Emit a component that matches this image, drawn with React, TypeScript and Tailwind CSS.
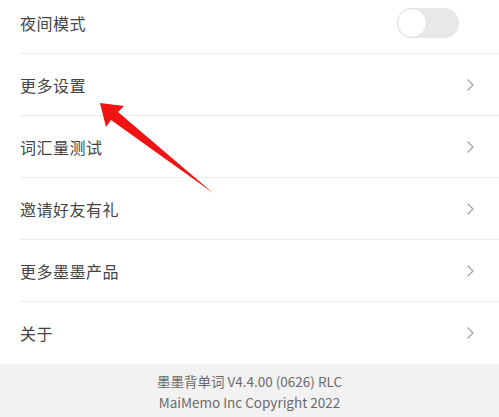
const rows = ["更多设置", "词汇量测试", "邀请好友有礼", "更多墨墨产品", "关于"];

function Chevron() {
  return (
    <svg width="9" height="14" viewBox="0 0 9 14" className="mr-[24px]">
      <path d="M1.5 1.5 L7 7 L1.5 12.5" fill="none" stroke="#a8a8a8" strokeWidth="1.4" />
    </svg>
  );
}

export default function App() {
  return (
    <div
      className="relative w-[499px] h-[417px] overflow-hidden bg-white"
      style={{ fontFamily: '"Noto Sans CJK SC", "Noto Sans", sans-serif' }}
    >
      <div className="flex flex-col">
        <div className="ml-[20px] h-[54px] pb-[8px] flex items-center justify-between border-b border-[#ececec]">
          <span className="text-[16px] tracking-[0.5px] text-[#444444]">夜间模式</span>
          <div className="mr-[40px] w-[62px] h-[30px] rounded-full bg-[#e8e8e8] flex items-center">
            <div className="w-[30px] h-[30px] rounded-full bg-white border border-[#e0e0e0]" />
          </div>
        </div>
        {rows.map((label, i) => (
          <div
            key={label}
            className={
              i < rows.length - 1
                ? "ml-[20px] h-[62px] flex items-center justify-between border-b border-[#ececec]"
                : "ml-[20px] h-[62px] flex items-center justify-between"
            }
          >
            <span className="text-[16px] tracking-[0.5px] text-[#444444]">{label}</span>
            <Chevron />
          </div>
        ))}
        <div className="h-[55px] bg-[#f2f2f2] flex flex-col items-center justify-center text-[13.5px] leading-[21px] text-[#6a6a6a]">
          <span>墨墨背单词 V4.4.00 (0626) RLC</span>
          <span>MaiMemo Inc Copyright 2022</span>
        </div>
      </div>

      <svg
        className="absolute left-0 top-0 pointer-events-none"
        width="499"
        height="417"
        viewBox="0 0 499 417"
      >
        <path
          d="M100 103 L124 106 L118 112 L213 193 L111 120 L106 127 Z"
          fill="#f01414"
        />
      </svg>
    </div>
  );
}
